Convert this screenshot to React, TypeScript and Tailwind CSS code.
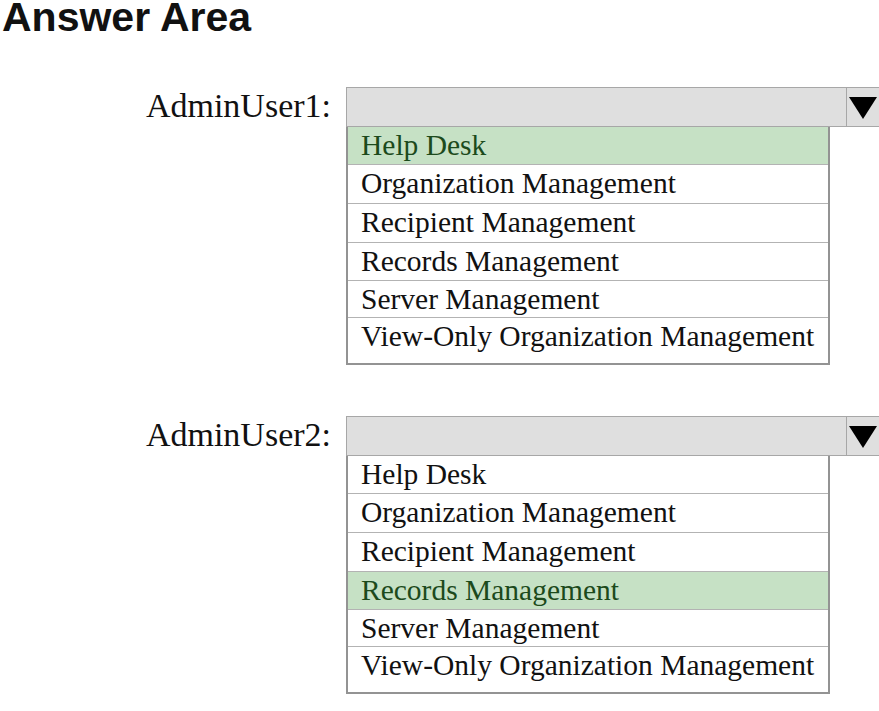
import React from "react";

const ROLES = [
  "Help Desk",
  "Organization Management",
  "Recipient Management",
  "Records Management",
  "Server Management",
  "View-Only Organization Management",
];

// row heights measured off the picture, bottom border included
const ROW_H = ["h-[38px]", "h-[39px]", "h-[39px]", "h-[38px]", "h-[37px]", "h-[45px]"];

const serif = { fontFamily: '"Liberation Serif", "Times New Roman", serif' };

const Arrow = () => (
  <svg width="28" height="22" viewBox="0 0 28 22">
    <polygon points="0,0 28,0 14,22" fill="#000" />
  </svg>
);

const Picker = ({ label, picked }: { label: string; picked: string }) => (
  <div className="flex">
    <div className="w-[346px] flex justify-end pr-[15px]">
      <span className="text-[34px] leading-[38px] text-[#111]" style={serif}>
        {label}
      </span>
    </div>
    <div className="flex-1 flex flex-col">
      <div className="h-[40px] flex bg-[#dfdfdf] border border-r-0 border-[#a7a7a7]">
        <div className="flex-1" />
        <div className="w-[33px] border-l border-[#a7a7a7] flex items-center justify-center pt-[2px]">
          <Arrow />
        </div>
      </div>
      <div className="w-[484px] border-2 border-t-0 border-[#939393] bg-white" style={serif}>
        {ROLES.map((r, i) => {
          const on = r === picked;
          return (
            <div
              key={r}
              className={`${ROW_H[i]} pl-[13px] text-[29.5px] leading-[36px] ${
                i < ROLES.length - 1 ? "border-b border-[#b3b3b3]" : ""
              } ${on ? "bg-[#c6e1c5] text-[#1c4a1c]" : "text-[#111]"}`}
            >
              {r}
            </div>
          );
        })}
      </div>
    </div>
  </div>
);

export default function App() {
  return (
    <div className="w-[879px] h-[711px] bg-white overflow-hidden flex flex-col">
      <h1
        className="ml-[2px] text-[41px] leading-[34px] font-bold text-[#111]"
        style={{ fontFamily: '"Liberation Sans", Arial, sans-serif' }}
      >
        Answer Area
      </h1>
      <div className="mt-[53px]">
        <Picker label="AdminUser1:" picked="Help Desk" />
      </div>
      <div className="mt-[51px]">
        <Picker label="AdminUser2:" picked="Records Management" />
      </div>
    </div>
  );
}
